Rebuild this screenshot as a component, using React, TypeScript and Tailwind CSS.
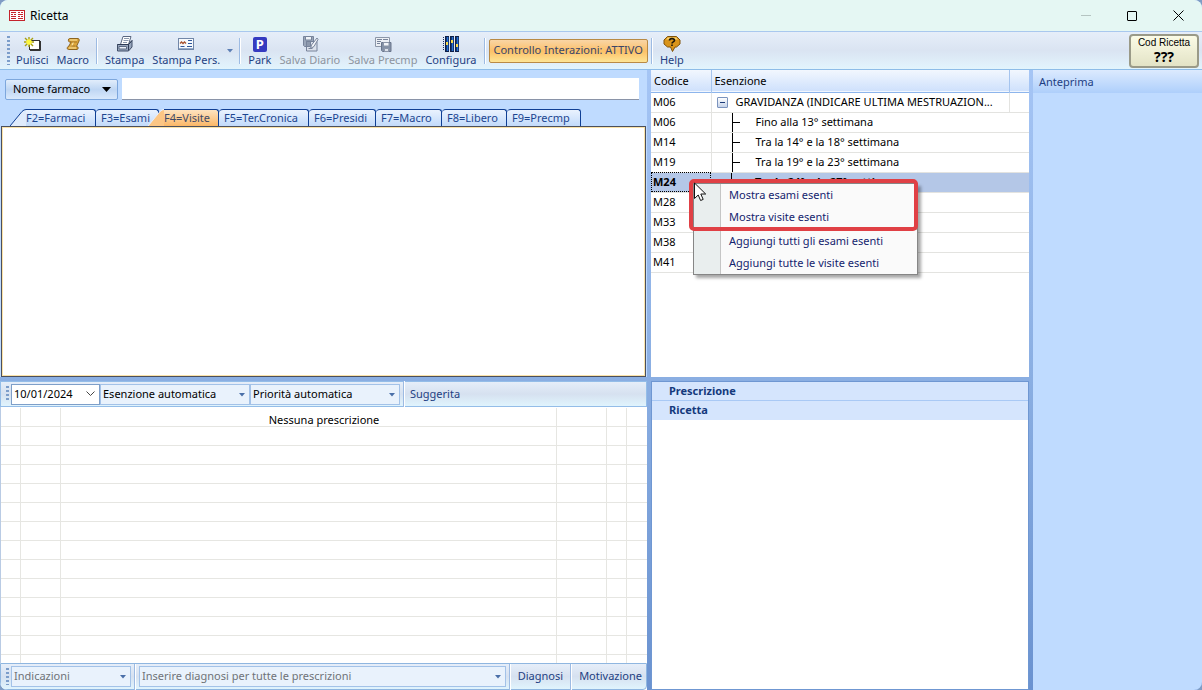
import React from 'react';
import clsx from 'clsx';

interface ToolButtonProps {
  label: string;
  icon: React.ReactNode;
  disabled?: boolean;
}

const exemptions = [
  { code: 'M06', text: 'Fino alla 13° settimana' },
  { code: 'M14', text: 'Tra la 14° e la 18° settimana' },
  { code: 'M19', text: 'Tra la 19° e la 23° settimana' },
  { code: 'M24', text: 'Tra la 24° e la 27° setti', selected: true },
  { code: 'M28' },
  { code: 'M33' },
  { code: 'M38' },
  { code: 'M41' },
];

const plainTabs = [
  { label: 'F5=Ter.Cronica', width: 'w-[90px]' },
  { label: 'F6=Presidi', width: 'w-[67px]' },
  { label: 'F7=Macro', width: 'w-[66px]' },
  { label: 'F8=Libero', width: 'w-[65px]' },
  { label: 'F9=Precmp', width: 'w-[74px]' },
];

/* ---------- icons ---------- */

const RicettaIcon = () => (
  <svg width="16" height="11" viewBox="0 0 16 11" fill="none" stroke="#c4242c">
    <rect x="0.5" y="0.5" width="15" height="10" fill="#fff" />
    <path d="M2 2.5h5M9 2.5h2M12 2.5h2M2 4.5h2M5 4.5h2M9 4.5h5M2 6.5h5M9 6.5h2M12 6.5h2M2 8.5h5M9 8.5h5" />
  </svg>
);

const PulisciIcon = () => (
  <svg width="18" height="16" viewBox="0 0 18 16">
    <rect x="6.5" y="4.5" width="10" height="9" fill="#fff" stroke="#333" />
    <path d="M17.5 5v9.5H7" stroke="#333" fill="none" />
    <path d="M6 1v10M1 6h10M2 2l8 8M10 2l-8 8" stroke="#a89f14" strokeWidth="1.4" />
    <path d="M6 3v6M3 6h6M4 4l4 4M8 4L4 8" stroke="#fff83c" strokeWidth="1.4" />
  </svg>
);

const MacroIcon = () => (
  <svg width="16" height="16" viewBox="0 0 16 16">
    <path
      d="M4.5 2.5h8.500c1.500 0 1.500 2.500.5 3.500l-2 4.500h.5c1.500 0 1.500 3 0 3H3.500c-2 0-1.500-3 .5-3.500l2-4H4.500c-1.500 0-1.500-3.500 0-3.500z"
      fill="#dda63c"
      stroke="#8c6420"
    />
    <path d="M5 4h7M4 12h7M8.500 6l-2 4.500" stroke="#fbe3a0" fill="none" strokeWidth="1.2" />
    <path d="M5 6h7M10.500 10H6" stroke="#a87826" />
  </svg>
);

const StampaIcon = () => (
  <svg width="18" height="16" viewBox="0 0 18 16">
    <path d="M7 0.500h8l-2.500 8H4.500z" fill="#fff" stroke="#59667f" />
    <path d="M8 2.500h5M7.500 4.500h5M7 6.500h4" stroke="#8b98ad" />
    <path d="M1.500 8.500h11l3.500-4v6.500l-3.500 4h-11z" fill="#98a6bd" stroke="#414e68" />
    <path d="M1.500 8.500h11v6M12.500 8.500l3.500-4" fill="none" stroke="#2f3b54" />
    <path d="M3 10.500h7.500v2.500H3z" fill="#eef2fa" stroke="#5d6a82" />
  </svg>
);

const CardIcon = () => (
  <svg width="18" height="16" viewBox="0 0 18 16">
    <rect x="1.500" y="2.500" width="15" height="11" fill="#f7fafd" stroke="#7287a8" />
    <path d="M2 12.500h14" stroke="#94abcb" />
    <path d="M3 7.500l1.500-1.500 1.500 1.500 1.500-1.500 1.500 1.500" stroke="#a8522f" strokeWidth="1.3" fill="none" />
    <path d="M11 4.500h4M11 7.500h4M3.500 10.500h4M10 10.500h5" stroke="#31589c" />
  </svg>
);

const ParkIcon = () => (
  <span className="flex h-[15px] w-[14px] items-center justify-center rounded-[2px] bg-[#363bc0] text-[13px] leading-[15px] font-bold text-white">
    P
  </span>
);

const DiarioIcon = () => (
  <svg width="18" height="16" viewBox="0 0 18 16" stroke="#77839a">
    <path d="M2.500 0.500h10v10h-9l-1-1z" fill="#9aa6b9" />
    <path d="M4.500 0.500h6v3.500h-6z" fill="#f0f3f8" />
    <path d="M5.500 5.500h10.500v9.500H5.500z" fill="#dbe1eb" />
    <path d="M5.500 5.500h4v5h-4z" fill="#8d99ad" />
    <path d="M7.500 12.500h4" fill="none" />
    <path d="M16 2l-5.500 7-1 3.500L13 10.500 17 3.500z" fill="#f2f4f8" />
  </svg>
);

const PrecmpIcon = () => (
  <svg width="18" height="16" viewBox="0 0 18 16" stroke="#8c96a8">
    <path d="M1.500 1.500h14v9h-14z" fill="#edf0f5" />
    <path d="M3 3.500h5M9 3.500h5M3 5.500h4M3 7.500h3" stroke="#77839a" />
    <path d="M7.500 6.500h9.500v9H8.500l-1-1z" fill="#8592a7" stroke="#6a768c" />
    <path d="M9.500 6.500h5.500v3.500H9.500z" fill="#f2f4f8" />
    <path d="M10.500 12.500h4v3h-4z" fill="#dde2ea" />
  </svg>
);

const ConfiguraIcon = () => (
  <svg width="18" height="16" viewBox="0 0 18 16">
    <path d="M1.500 1v14" stroke="#1a2f60" strokeDasharray="1 1" />
    <path d="M3 0h4v16H3zM8 0h4v16H8zM13 0h4v16h-4z" fill="#0e1f48" />
    <path d="M5.500 1v14M10.500 1v14M15.500 1v14" stroke="#2672d6" strokeWidth="1.600" />
    <path d="M4 6h2v3H4zM9 4h2v3H9zM14 8h2v3h-2z" fill="#f8dc50" />
  </svg>
);

const HelpIcon = () => (
  <svg width="18" height="16" viewBox="0 0 18 16">
    <path d="M4.500 0.500h9L17 4v4l-3.500 3H12l-2.500 4.500L7.500 11h-3L1 8V4z" fill="#d9941a" stroke="#80530c" />
    <path d="M5 1.500h8l2 2H3z" fill="#f9d471" />
    <path d="M6.500 4.500c0-2.500 5-2.500 5 0 0 1.500-2.500 1.300-2.500 3M9 8.500V10" stroke="#1c1508" strokeWidth="1.600" fill="none" />
  </svg>
);

const DownArrow = ({ className }: { className?: string }) => (
  <svg className={className} width="6" height="4" viewBox="0 0 6 4">
    <path d="M0 0h6L3 3.500z" fill="currentColor" />
  </svg>
);

/* ---------- small parts ---------- */

const ToolButton: React.FC<ToolButtonProps> = ({ label, icon, disabled }) => (
  <button
    disabled={disabled}
    className={clsx(
      'flex flex-col items-center px-1 pt-[2px] whitespace-nowrap',
      disabled ? 'text-[#8d949e]' : 'text-[#1e3f82]'
    )}
  >
    <span className="flex h-4 items-center">{icon}</span>
    <span className="leading-[15px]">{label}</span>
  </button>
);

const Separator = () => <div className="mx-[3px] h-[26px] w-[2px] shrink-0 border-l border-[#9dbbe3] bg-white" />;

const Grip = () => (
  <div className="my-1 mr-[2px] ml-[5px] w-[3px] shrink-0 self-stretch bg-[repeating-linear-gradient(to_bottom,#7c9dca_0_2px,transparent_2px_4px)]" />
);

const Combo = ({ label, value, className }: { label: string; value: string; className?: string }) => (
  <div className={clsx('relative h-[21px] border border-[#a3c2e8] bg-[#e9f2fc]', className)}>
    <select aria-label={label} className="h-full w-full appearance-none bg-transparent pl-[2px] outline-none">
      <option>{value}</option>
    </select>
    <DownArrow className="pointer-events-none absolute top-2 right-1 text-[#4a6fa8]" />
  </div>
);

const SlantedTab = ({ label, active }: { label: string; active?: boolean }) => (
  <button
    role="tab"
    aria-selected={!!active}
    className={clsx('relative flex h-[17px]', active ? 'z-10 -ml-[11px] w-[71px] text-[#3f4a66]' : 'w-[86px] text-[#1c4590]')}
  >
    <svg width="16" height="17" viewBox="0 0 16 17" className="shrink-0">
      <path d="M0 17L12 2.500Q14 .5 16 .5V17z" fill={active ? '#fcc684' : '#dfebfc'} />
      <path d="M0 17L12 2.500Q14 .5 16 .5" fill="none" stroke={active ? '#e8eefa' : '#0f3f94'} />
    </svg>
    <span
      className={clsx(
        'h-[17px] flex-1 rounded-tr-[3px] border-t border-r border-[#0f3f94] text-left leading-[16px] whitespace-nowrap',
        active ? 'bg-linear-to-b from-[#fde3c0] to-[#fbb765]' : 'bg-linear-to-b from-[#eaf2fe] to-[#c2dafa]'
      )}
    >
      {label}
    </span>
  </button>
);

const Tab = ({ label, width }: { label: string; width: string }) => (
  <button
    role="tab"
    aria-selected={false}
    className={clsx(
      'h-[17px] rounded-tl-[4px] rounded-tr-[3px] border-t border-r border-[#0f3f94] bg-linear-to-b from-[#eaf2fe] to-[#c2dafa] pl-[5px] text-left leading-[16px] whitespace-nowrap text-[#1c4590]',
      width
    )}
  >
    {label}
  </button>
);

/* ---------- panels ---------- */

const TitleBar = () => (
  <header className="flex h-8 shrink-0 items-center border-b border-[#a9c8ee] bg-[#e5f7f3] pr-px pl-[9px]">
    <RicettaIcon />
    <h1 className="flex-1 pl-[5px] text-[12px] text-black">Ricetta</h1>
    <button aria-label="Riduci" className="flex h-full w-[46px] items-center justify-center">
      <span className="h-px w-[10px] bg-[#b5c4c1]" />
    </button>
    <button aria-label="Ingrandisci" className="flex h-full w-[46px] items-center justify-center">
      <span className="h-[10px] w-[10px] rounded-[1px] border border-black" />
    </button>
    <button aria-label="Chiudi" className="flex h-full w-[46px] items-center justify-center">
      <svg width="11" height="11" viewBox="0 0 11 11" stroke="#000">
        <path d="M.5.5l10 10M10.500.5l-10 10" />
      </svg>
    </button>
  </header>
);

const Toolbar = () => (
  <div className="flex h-[38px] shrink-0 items-center border-b border-[#8dbce8] bg-linear-to-b from-[#e6eef9] via-[#dae4f2] to-[#e2f4fd] pl-[2px]">
    <Grip />
    <ToolButton label="Pulisci" icon={<PulisciIcon />} />
    <ToolButton label="Macro" icon={<MacroIcon />} />
    <Separator />
    <ToolButton label="Stampa" icon={<StampaIcon />} />
    <ToolButton label="Stampa Pers." icon={<CardIcon />} />
    <button aria-label="Altre stampe" className="px-[3px] text-[#5c7fb5]">
      <DownArrow />
    </button>
    <Separator />
    <ToolButton label="Park" icon={<ParkIcon />} />
    <ToolButton label="Salva Diario" icon={<DiarioIcon />} disabled />
    <ToolButton label="Salva Precmp" icon={<PrecmpIcon />} disabled />
    <ToolButton label="Configura" icon={<ConfiguraIcon />} />
    <Separator />
    <button className="h-6 rounded-[2px] border border-[#b98a45] bg-linear-to-b from-[#f9d5a5] via-[#fcc067] to-[#fde595] px-1 whitespace-nowrap text-[#3a4568]">
      Controllo Interazioni: ATTIVO
    </button>
    <Separator />
    <ToolButton label="Help" icon={<HelpIcon />} />
    <button className="mr-[3px] ml-auto flex h-[34px] w-[70px] flex-col items-center rounded-[4px] border-2 border-[#9a9a88] bg-linear-to-b from-[#fbfbe6] to-[#e3e3c6] text-black">
      <span className="font-['Liberation_Sans'] text-[10px] leading-[14px] whitespace-nowrap">Cod Ricetta</span>
      <span className="text-[14px] leading-[13px] font-bold">???</span>
    </button>
  </div>
);

const SearchPanel = () => (
  <section className="flex min-h-0 flex-col bg-[#bfdbff]">
    <div className="flex items-center gap-1 pt-2 pr-2 pl-[5px]">
      <button className="flex h-[21px] w-[113px] items-center justify-between rounded-[2px] border border-[#7da7dd] bg-linear-to-b from-[#e1edfb] via-[#bfd6f3] to-[#d9e9fc] pr-[6px] pl-[7px] text-black">
        Nome farmaco
        <svg width="9" height="5" viewBox="0 0 9 5">
          <path d="M0 0h9L4.500 5z" />
        </svg>
      </button>
      <input aria-label="Nome farmaco" className="h-[22px] min-w-0 flex-1 border-b border-[#8a94a8] bg-white px-1 outline-none" />
    </div>
    <div role="tablist" className="flex pt-[9px] pl-[10px]">
      <SlantedTab label="F2=Farmaci" />
      <Tab label="F3=Esami" width="w-[63px]" />
      <SlantedTab label="F4=Visite" active />
      {plainTabs.map((tab) => (
        <Tab key={tab.label} label={tab.label} width={tab.width} />
      ))}
    </div>
    <div className="mx-px flex-1 border border-[#4b4f5c] bg-white shadow-[inset_0_0_0_1px_#fbe3a8]" />
  </section>
);

const ContextMenu = () => {
  const item = 'block h-[22px] w-full pl-[35px] text-left text-[#14246e] whitespace-nowrap';
  return (
    <div className="absolute top-[113px] left-[42px] z-10 w-[225px]">
      <div
        role="menu"
        className="border border-[#868686] bg-[#fafafa] bg-[linear-gradient(to_right,#e9eeee_26px,#c5c5c5_26px_27px,transparent_27px)] bg-no-repeat shadow-[3px_3px_3px_rgba(0,0,0,0.35)]"
      >
        <button role="menuitem" className={item}>Mostra esami esenti</button>
        <button role="menuitem" className={item}>Mostra visite esenti</button>
        <div className="ml-[27px] h-[2px] bg-[#c5c5c5]" />
        <button role="menuitem" className={item}>Aggiungi tutti gli esami esenti</button>
        <button role="menuitem" className={item}>Aggiungi tutte le visite esenti</button>
      </div>
      {/* highlight frame round the first two commands */}
      <div className="absolute -top-1 right-0 -left-1 h-[52px] rounded-[5px] border-4 border-[#e04045]" />
      <svg className="absolute -top-px left-0" width="14" height="20" viewBox="0 0 14 20">
        <path d="M1.500 1v15.500l3.700-3.500 2.400 5.500 2.600-1.100-2.400-5.400h4.900z" fill="#fff" stroke="#111" />
      </svg>
    </div>
  );
};

const ExemptionPanel = () => (
  <section className="relative min-h-0 bg-white">
    <table className="w-full table-fixed border-collapse text-black">
      <colgroup>
        <col className="w-[60px]" />
        <col />
        <col className="w-[20px]" />
      </colgroup>
      <thead>
        <tr className="h-[22px] border-b border-[#8db5ec] bg-linear-to-b from-[#f2f7fe] to-[#cfe1fc] text-left">
          <th className="border-r border-[#a5c4ee] p-0 pl-[3px] font-normal">Codice</th>
          <th className="border-r border-[#a5c4ee] p-0 pl-[3px] font-normal">Esenzione</th>
          <th />
        </tr>
      </thead>
      <tbody>
        <tr className="h-5 border-b border-[#e3e3e0]">
          <td className="border-r border-[#e3e3e0] p-0 pl-[2px]">M06</td>
          <td className="border-r border-[#e3e3e0] p-0 pl-[5px]">
            <div className="flex items-center">
              <button
                aria-label="Comprimi"
                className="flex h-[11px] w-[11px] shrink-0 items-center justify-center rounded-[1px] border border-[#7b93bd] bg-linear-to-b from-white to-[#c5d2e8]"
              >
                <span className="h-px w-[5px] bg-[#1c3b78]" />
              </button>
              <span className="pl-2 whitespace-nowrap">GRAVIDANZA (INDICARE ULTIMA MESTRUAZION...</span>
            </div>
          </td>
          <td />
        </tr>
        {exemptions.map((row) => (
          <tr key={row.code} className={clsx('h-5 border-b border-[#e3e3e0]', row.selected && 'bg-[#b4c7e7] font-bold')}>
            <td
              className={clsx(
                'p-0 pl-[2px] align-top leading-[17px]',
                row.selected ? 'outline-1 -outline-offset-1 outline-black outline-dotted' : 'border-r border-[#e3e3e0]'
              )}
            >
              {row.code}
            </td>
            <td colSpan={2} className="p-0 pl-5 align-top">
              {row.text && (
                <div className="flex items-start">
                  <span className="h-[19px] w-px bg-black" />
                  <span className="h-px w-[7px] self-center bg-black" />
                  <span className="pl-4 leading-[17px] whitespace-nowrap">{row.text}</span>
                </div>
              )}
            </td>
          </tr>
        ))}
      </tbody>
    </table>
    <ContextMenu />
  </section>
);

const PrescriptionPanel = () => {
  const cell = 'border-r border-b border-[#e6e6e2]';
  return (
    <section className="flex min-h-0 flex-col bg-white">
      <div className="flex h-[26px] shrink-0 items-center border border-[#94bde8] bg-linear-to-b from-[#e6eef9] via-[#d6e1f0] to-[#e0f4fd]">
        <Grip />
        <div className="flex h-[21px] w-[89px] shrink-0 items-center border border-[#7e9fc9] bg-white pr-1">
          <input aria-label="Data" defaultValue="10/01/2024" className="min-w-0 flex-1 pl-[2px] text-black outline-none" />
          <button aria-label="Apri calendario">
            <svg width="9" height="6" viewBox="0 0 9 6" fill="none" stroke="#444">
              <path d="M.5.5l4 4 4-4" />
            </svg>
          </button>
        </div>
        <Combo label="Esenzione" value="Esenzione automatica" className="w-[150px] text-black" />
        <Combo label="Priorità" value="Priorità automatica" className="w-[150px] text-black" />
        <Separator />
        <button className="px-[2px] text-[#1e3f82]">Suggerita</button>
      </div>
      <div className="relative min-h-0 flex-1 overflow-hidden border-l border-[#b9cbe4] pt-px">
        <table className="w-full table-fixed border-separate border-spacing-0">
          <colgroup>
            <col className="w-[20px]" />
            <col className="w-[40px]" />
            <col />
            <col className="w-[50px]" />
            <col className="w-[20px]" />
            <col className="w-[20px]" />
          </colgroup>
          <tbody>
            {Array.from({ length: 14 }, (_, i) => (
              <tr key={i} className="h-[19px]">
                <td className={cell} />
                <td className={cell} />
                <td className={cell} />
                <td className={cell} />
                <td className={cell} />
                <td className="border-b border-[#e6e6e2]" />
              </tr>
            ))}
          </tbody>
        </table>
        <p className="absolute inset-x-0 top-[5px] text-center text-black">Nessuna prescrizione</p>
      </div>
      <div className="flex h-[27px] shrink-0 items-center rounded-b-[4px] border border-[#8fb6e0] bg-linear-to-b from-[#e6eef9] via-[#d6e1f0] to-[#e0f4fd]">
        <Grip />
        <Combo label="Indicazioni" value="Indicazioni" className="w-[120px] shrink-0 text-[#6f7378]" />
        <Separator />
        <Combo label="Diagnosi" value="Inserire diagnosi per tutte le prescrizioni" className="min-w-0 flex-1 text-[#6f7378]" />
        <Separator />
        <button className="px-1 text-[#1e3f82]">Diagnosi</button>
        <Separator />
        <button className="px-1 text-[#1e3f82]">Motivazione</button>
      </div>
    </section>
  );
};

const SummaryPanel = () => (
  <section className="min-h-0 border border-[#6f97d2] bg-white text-[#14397c]">
    <h2 className="h-[19px] border-b border-[#a9c9f5] bg-[#d5e5fd] pl-[17px] leading-[17px] font-bold">Prescrizione</h2>
    <h2 className="h-[19px] bg-[#d5e5fd] pl-[17px] leading-[17px] font-bold">Ricetta</h2>
  </section>
);

export default function App() {
  return (
    <div className="h-screen bg-[#7f9cc4] font-['Noto_Sans',sans-serif] text-[11px]">
      <div className="flex h-full flex-col overflow-hidden rounded-[8px] bg-[#bfdbff]">
        <TitleBar />
        <Toolbar />
        <main className="grid min-h-0 flex-1 grid-cols-[647fr_378fr_169fr] grid-rows-[307fr_309fr] gap-1 bg-linear-to-b from-[#a5c5f5] via-[#8aaee2] to-[#6a92d0]">
          <SearchPanel />
          <ExemptionPanel />
          <aside className="row-span-2 bg-[#bfdbff] text-[#1e3f82]">
            <h2 className="h-[23px] bg-linear-to-b from-[#dceafe] to-[#aecffb] pl-[6px] leading-[23px]">Anteprima</h2>
          </aside>
          <PrescriptionPanel />
          <SummaryPanel />
        </main>
      </div>
    </div>
  );
}
